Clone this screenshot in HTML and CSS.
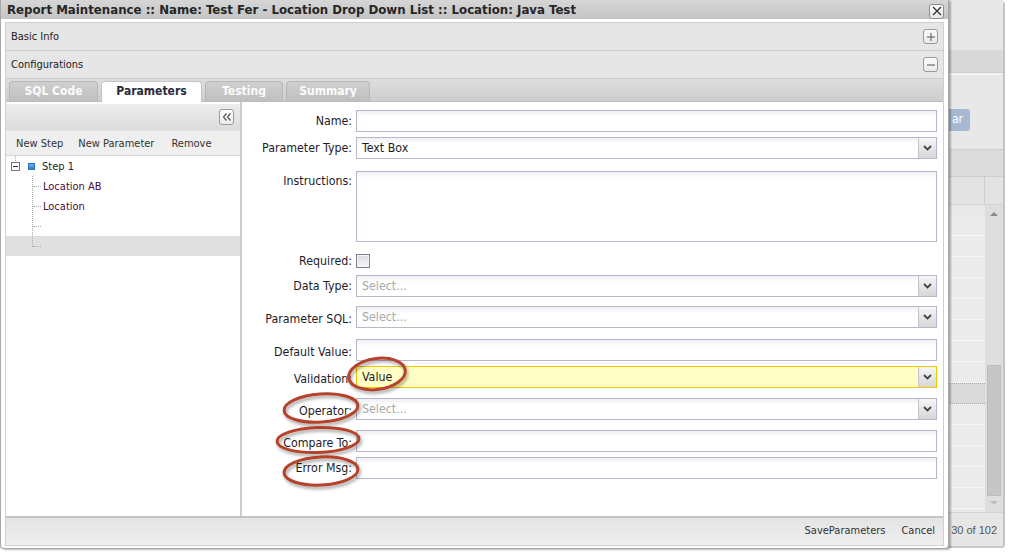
FILE: index.html
```html
<!DOCTYPE html>
<html>
<head>
<meta charset="utf-8">
<link rel="stylesheet" href="styles.css">
</head>
<body>
<div class="page">
  <div class="bg">
    <div class="bg-top"></div>
    <div class="bg-band"></div>
    <div class="bg-tool"><span class="bg-btn">ar</span></div>
    <div class="bg-band2"></div>
    <div class="bg-head"><span class="bg-hcell"></span><span class="bg-hcell small"></span></div>
    <div class="bg-grid">
      <div class="bg-rows">
        <div class="bg-row"></div><div class="bg-row"></div><div class="bg-row"></div><div class="bg-row"></div>
        <div class="bg-row"></div><div class="bg-row"></div><div class="bg-row"></div><div class="bg-row"></div>
        <div class="bg-row sel"></div><div class="bg-row"></div><div class="bg-row"></div><div class="bg-row"></div>
        <div class="bg-row"></div><div class="bg-row"></div>
      </div>
      <div class="bg-scroll">
        <span class="arrow-up"></span>
        <span class="thumb"></span>
        <span class="arrow-down"></span>
      </div>
    </div>
    <div class="bg-foot"><span class="bg-count">30 of 102</span></div>
  </div>

  <div class="dialog">
    <div class="titlebar">
      <span class="title">Report Maintenance :: Name: Test Fer - Location Drop Down List :: Location: Java Test</span>
      <span class="close"><svg width="10" height="10" viewBox="0 0 10 10"><path d="M1 1L9 9M9 1L1 9" stroke="#333" stroke-width="1.3"/></svg></span>
    </div>
    <div class="dbody">
      <div class="inner">
        <div class="acc">
          <span>Basic Info</span>
          <span class="accbtn"><svg width="8" height="8" viewBox="0 0 8 8"><path d="M0 4H8M4 0V8" stroke="#555" stroke-width="1"/></svg></span>
        </div>
        <div class="acc">
          <span>Configurations</span>
          <span class="accbtn"><svg width="8" height="8" viewBox="0 0 8 8"><path d="M0 4H8" stroke="#555" stroke-width="1"/></svg></span>
        </div>
        <div class="tabs">
          <span class="tab t1"><span class="tt">SQL Code</span></span>
          <span class="tab active t2"><span class="tt">Parameters</span></span>
          <span class="tab t3"><span class="tt">Testing</span></span>
          <span class="tab t4"><span class="tt">Summary</span></span>
        </div>
        <div class="content">
          <div class="left">
            <div class="lhead">
              <span class="collapse"><svg width="10" height="8" viewBox="0 0 10 8"><path d="M4.5 0.5L1.5 4L4.5 7.5M8.5 0.5L5.5 4L8.5 7.5" stroke="#555" stroke-width="1.2" fill="none"/></svg></span>
            </div>
            <div class="lmenu">
              <span>New Step</span><span>New Parameter</span><span class="last">Remove</span>
            </div>
            <div class="tree">
              <span class="vline top"></span>
              <div class="trow root">
                <span class="minus"><svg width="9" height="9" viewBox="0 0 9 9"><rect x="0.5" y="0.5" width="8" height="8" fill="#fff" stroke="#777"/><path d="M2 4.5H7" stroke="#333"/></svg></span>
                <span class="node"></span>
                <span class="tlabel">Step 1</span>
              </div>
              <div class="trow child"><span class="dots"></span><span class="clabel">Location AB</span></div>
              <div class="trow child"><span class="dots"></span><span class="clabel">Location</span></div>
              <div class="trow child"><span class="dots"></span></div>
              <div class="trow child sel"><span class="dots"></span></div>
              <span class="vline"></span>
            </div>
          </div>
          <div class="right">
            <div class="frow g5">
              <label class="lbl">Name:</label>
              <span class="inp"></span>
            </div>
            <div class="frow g12">
              <label class="lbl">Parameter Type:</label>
              <span class="inp sel"><span class="val">Text Box</span><span class="dd"><svg width="9" height="6" viewBox="0 0 9 6"><path d="M1 1L4.5 4.5L8 1" stroke="#444" stroke-width="1.8" fill="none"/></svg></span></span>
            </div>
            <div class="frow top g12">
              <label class="lbl">Instructions:</label>
              <span class="inp area"></span>
            </div>
            <div class="frow g7">
              <label class="lbl">Required:</label>
              <span class="chk"></span>
            </div>
            <div class="frow g9">
              <label class="lbl">Data Type:</label>
              <span class="inp sel"><span class="ph">Select...</span><span class="dd"><svg width="9" height="6" viewBox="0 0 9 6"><path d="M1 1L4.5 4.5L8 1" stroke="#444" stroke-width="1.8" fill="none"/></svg></span></span>
            </div>
            <div class="frow g11">
              <label class="lbl low">Parameter SQL:</label>
              <span class="inp sel"><span class="ph">Select...</span><span class="dd"><svg width="9" height="6" viewBox="0 0 9 6"><path d="M1 1L4.5 4.5L8 1" stroke="#444" stroke-width="1.8" fill="none"/></svg></span></span>
            </div>
            <div class="frow g5">
              <label class="lbl low">Default Value:</label>
              <span class="inp"></span>
            </div>
            <div class="frow g10">
              <label class="lbl low">Validation:</label>
              <span class="inp sel warn"><span class="val">Value</span><span class="dd"><svg width="9" height="6" viewBox="0 0 9 6"><path d="M1 1L4.5 4.5L8 1" stroke="#444" stroke-width="1.8" fill="none"/></svg></span></span>
            </div>
            <div class="frow g10">
              <label class="lbl low">Operator:</label>
              <span class="inp sel"><span class="ph">Select...</span><span class="dd"><svg width="9" height="6" viewBox="0 0 9 6"><path d="M1 1L4.5 4.5L8 1" stroke="#444" stroke-width="1.8" fill="none"/></svg></span></span>
            </div>
            <div class="frow g5">
              <label class="lbl low">Compare To:</label>
              <span class="inp"></span>
            </div>
            <div class="frow">
              <label class="lbl">Error Msg:</label>
              <span class="inp"></span>
            </div>
          </div>
        </div>
        <div class="foot">
          <span>SaveParameters</span><span>Cancel</span>
        </div>
      </div>
    </div>
  </div>

  <svg class="marks" width="1013" height="557" viewBox="0 0 1013 557">
    <defs>
      <filter id="sh" x="-20%" y="-30%" width="140%" height="160%">
        <feDropShadow dx="1.5" dy="2.5" stdDeviation="1.5" flood-color="#000" flood-opacity="0.35"/>
      </filter>
    </defs>
    <g fill="none" stroke="#b5432c" stroke-width="3" filter="url(#sh)">
      <ellipse cx="377" cy="374" rx="28.5" ry="15.5" transform="rotate(-8 377 374)"/>
      <ellipse cx="321" cy="408" rx="37" ry="14" transform="rotate(-4 321 408)"/>
      <ellipse cx="318" cy="440" rx="41" ry="12.5" transform="rotate(-2 318 440)"/>
      <ellipse cx="321" cy="471" rx="37" ry="14" transform="rotate(-3 321 471)"/>
    </g>
  </svg>
</div>
</body>
</html>
```
FILE: styles.css
```css
* { box-sizing: border-box; }
html, body { margin: 0; padding: 0; background: #fff; }
body {
  font-family: "DejaVu Sans Condensed", "DejaVu Sans", sans-serif;
  font-stretch: condensed;
  font-size: 11px;
  color: #222;
}
.page { position: relative; width: 1013px; height: 557px; overflow: hidden; }

/* background page */
.bg {
  width: 1005px;
  height: 548px;
  border-right: 2px solid #c4c4c4;
  border-bottom: 2px solid #c8c8c8;
  border-top-right-radius: 5px;
  border-bottom-right-radius: 3px;
  background: #e9e9e9;
  display: flex;
  flex-direction: column;
}
.bg-top { height: 50px; background: #e8e8e8; }
.bg-band { height: 23px; background: #d9d9d9; border-bottom: 1px solid #cfcfcf; }
.bg-tool { height: 76px; display: flex; justify-content: flex-end; padding: 34px 33px 0 0; background: #e8e8e8; border-top: 2px solid #f2f2f2; }
.bg-btn { width: 40px; height: 22px; background: #a7b9d2; border-radius: 3px; color: #fff; font-size: 12px; line-height: 21px; text-align: right; padding-right: 7px; }
.bg-band2 { height: 27px; background: #dcdcdc; border-top: 1px solid #d0d0d0; }
.bg-head { height: 29px; display: flex; justify-content: flex-end; background: #e3e3e3; border-top: 1px solid #cfcfcf; border-bottom: 1px solid #d2d2d2; }
.bg-hcell { width: 60px; border-right: 1px solid #cdcdcd; }
.bg-hcell.small { width: 18px; border-right: none; }
.bg-grid { flex: 1; display: flex; justify-content: flex-end; }
.bg-rows { width: 60px; display: flex; flex-direction: column; padding-top: 10px; }
.bg-row { height: 21px; background: #ebebeb; border-bottom: 1px solid #f6f6f6; }
.bg-row.sel { background: #dadada; border-top: 1px dotted #aaa; border-bottom: 1px dotted #aaa; }
.bg-scroll { width: 18px; background: #dedede; display: flex; flex-direction: column; align-items: center; padding: 6px 1px 4px; }
.arrow-up { width: 0; height: 0; border-left: 4px solid transparent; border-right: 4px solid transparent; border-bottom: 4px solid #8a8a8a; margin-top: 1px; }
.thumb { width: 14px; height: 131px; background: #c6c6c6; border: 1px solid #bdbdbd; margin-top: 149px; }
.arrow-down { width: 0; height: 0; border-left: 4px solid transparent; border-right: 4px solid transparent; border-top: 4px solid #bfbfbf; margin-top: 5px; }
.bg-foot { height: 34px; display: flex; justify-content: flex-end; align-items: center; padding-right: 6px; border-top: 1px solid #d4d4d4; background: #e6e6e6; }
.bg-count { font-family: "Liberation Sans", sans-serif; font-size: 11px; color: #555; }

/* dialog */
.dialog {
  position: absolute;
  left: 0; top: 0;
  width: 949px; height: 549px;
  background: #fff;
  border: 1px solid #a8a8a8;
  border-top: none;
  border-radius: 0 0 4px 4px;
  box-shadow: 2px 1px 2px rgba(0,0,0,0.28);
  display: flex;
  flex-direction: column;
}
.titlebar {
  height: 19px;
  background: linear-gradient(#d6d6d6, #c4c4c4);
  display: flex;
  align-items: center;
  justify-content: space-between;
  padding: 0 4px 0 6px;
}
.title { font-weight: bold; font-size: 13.1px; color: #262626; white-space: nowrap; }
.close {
  width: 15px; height: 15px;
  border: 1px solid #8c8c8c; border-radius: 3px;
  background: linear-gradient(#fdfdfd, #e6e6e6);
  display: flex; align-items: center; justify-content: center;
  margin-top: 3px;
}
.dbody { flex: 1; padding: 3px 4px 2px 4px; display: flex; }
.inner { flex: 1; border: 1px solid #cfcfcf; display: flex; flex-direction: column; }
.acc {
  height: 28px;
  background: #e6e6e6;
  border-bottom: 1px solid #cdcdcd;
  display: flex; align-items: center; justify-content: space-between;
  padding: 0 5px 0 5px;
  font-size: 11px; color: #222;
}
.accbtn {
  width: 15px; height: 15px;
  border: 1px solid #999; border-radius: 3px;
  background: linear-gradient(#fcfcfc, #e9e9e9);
  display: flex; align-items: center; justify-content: center;
}
.tabs {
  height: 23px;
  background: linear-gradient(#dedede, #cdcdcd);
  border-bottom: 1px solid #bcbcbc;
  display: flex; align-items: flex-end;
  padding-left: 3px;
  gap: 3px;
}
.tab {
  height: 20px;
  border: 1px solid #b8b8b8; border-bottom: none;
  border-radius: 4px 4px 0 0;
  background: linear-gradient(#cfcfcf, #bfbfbf);
  color: #fbfbfb;
  font-weight: bold; font-size: 12px;
  display: flex; justify-content: center;
  padding-top: 2px;
}
.tt { display: block; height: 13px; line-height: 15px; overflow: hidden; }
.tab.active { background: #fff; color: #2a2a3a; border-color: #c4c4c4; height: 21px; margin-bottom: -1px; }
.tab.active .tt { height: 16px; }
.t1 { width: 89px; }
.t2 { width: 101px; }
.t3 { width: 78px; }
.t4 { width: 84px; }

.content { flex: 1; display: flex; min-height: 0; }
.left { width: 236px; border-right: 2px solid #cbcbcb; display: flex; flex-direction: column; padding-top: 2px; }
.lhead {
  height: 26px;
  background: linear-gradient(#ededed, #dcdcdc);
  display: flex; justify-content: flex-end; align-items: center;
  padding-right: 6px;
}
.collapse {
  width: 15px; height: 16px;
  border: 1px solid #9a9a9a; border-radius: 3px;
  background: linear-gradient(#fdfdfd, #ececec);
  display: flex; align-items: center; justify-content: center;
}
.lmenu {
  height: 26px;
  background: #efefef;
  border-top: 1px solid #e2e2e2;
  border-bottom: 1px solid #d6d6d6;
  display: flex; align-items: center; gap: 15px;
  padding-left: 10px;
  color: #333;
}
.lmenu .last { margin-left: 2px; }
.tree { position: relative; }
.trow { height: 20px; display: flex; align-items: center; }
.trow.root { padding-left: 5px; }
.minus { width: 9px; height: 9px; display: flex; }
.node { width: 7px; height: 7px; background: linear-gradient(#6fb2f0, #2e7fd0); border: 1px solid #2a70b8; margin-left: 8px; }
.tlabel { margin-left: 7px; color: #222; }
.trow.child { padding-left: 27px; }
.trow.sel { background: #e0e0e0; }
.dots { width: 8px; border-top: 1px dotted #aaa; margin-right: 2px; }
.clabel { color: #4a0d3c; }
.vline { position: absolute; left: 26px; top: 20px; height: 71px; border-left: 1px dotted #aaa; }
.vline.top { left: 9px; top: 0; height: 5px; }

.right { flex: 1; padding: 8px 6px 0 0; display: flex; flex-direction: column; }
.frow { display: flex; align-items: center; }
.frow.top { align-items: flex-start; }
.g5 { margin-bottom: 5px; }
.g7 { margin-bottom: 7px; }
.g9 { margin-bottom: 9px; }
.g10 { margin-bottom: 10px; }
.g11 { margin-bottom: 11px; }
.g12 { margin-bottom: 12px; }
.lbl { width: 114px; text-align: right; padding-right: 4px; color: #1c1c2a; white-space: nowrap; font-size: 12.3px; }
.lbl.low { padding-top: 3px; }
.frow.top .lbl { padding-top: 3px; }
.inp {
  flex: 1;
  height: 22px;
  border: 1px solid #b7b7c9;
  background: linear-gradient(#f0f0f3, #fff 6px);
  display: flex; align-items: center;
}
.inp.area { height: 71px; }
.inp.sel { padding-left: 5px; }
.val { flex: 1; color: #1c1c1c; font-size: 12.3px; }
.ph { flex: 1; color: #a8a8a8; font-size: 12.3px; }
.dd {
  width: 18px; height: 20px;
  border-left: 1px solid #c4c4d0;
  background: linear-gradient(#f6f6f6, #d6d6d6);
  display: flex; align-items: center; justify-content: center;
}
.inp.warn { background: #ffffc6; border-color: #f2c500; }
.chk { width: 14px; height: 14px; border: 1px solid #7f7f8f; background: linear-gradient(#dcdcdc, #f6f6f6); box-shadow: inset 0 0 0 1px #f4f4f4; }

.foot {
  height: 29px;
  background: linear-gradient(#e4e4e4, #efefef);
  border-top: 2px solid #c8c2c2;
  display: flex; justify-content: flex-end; align-items: center;
  gap: 16px;
  padding: 0 8px 2px 0;
  color: #333;
}

.marks { position: absolute; left: 0; top: 0; pointer-events: none; }
```
